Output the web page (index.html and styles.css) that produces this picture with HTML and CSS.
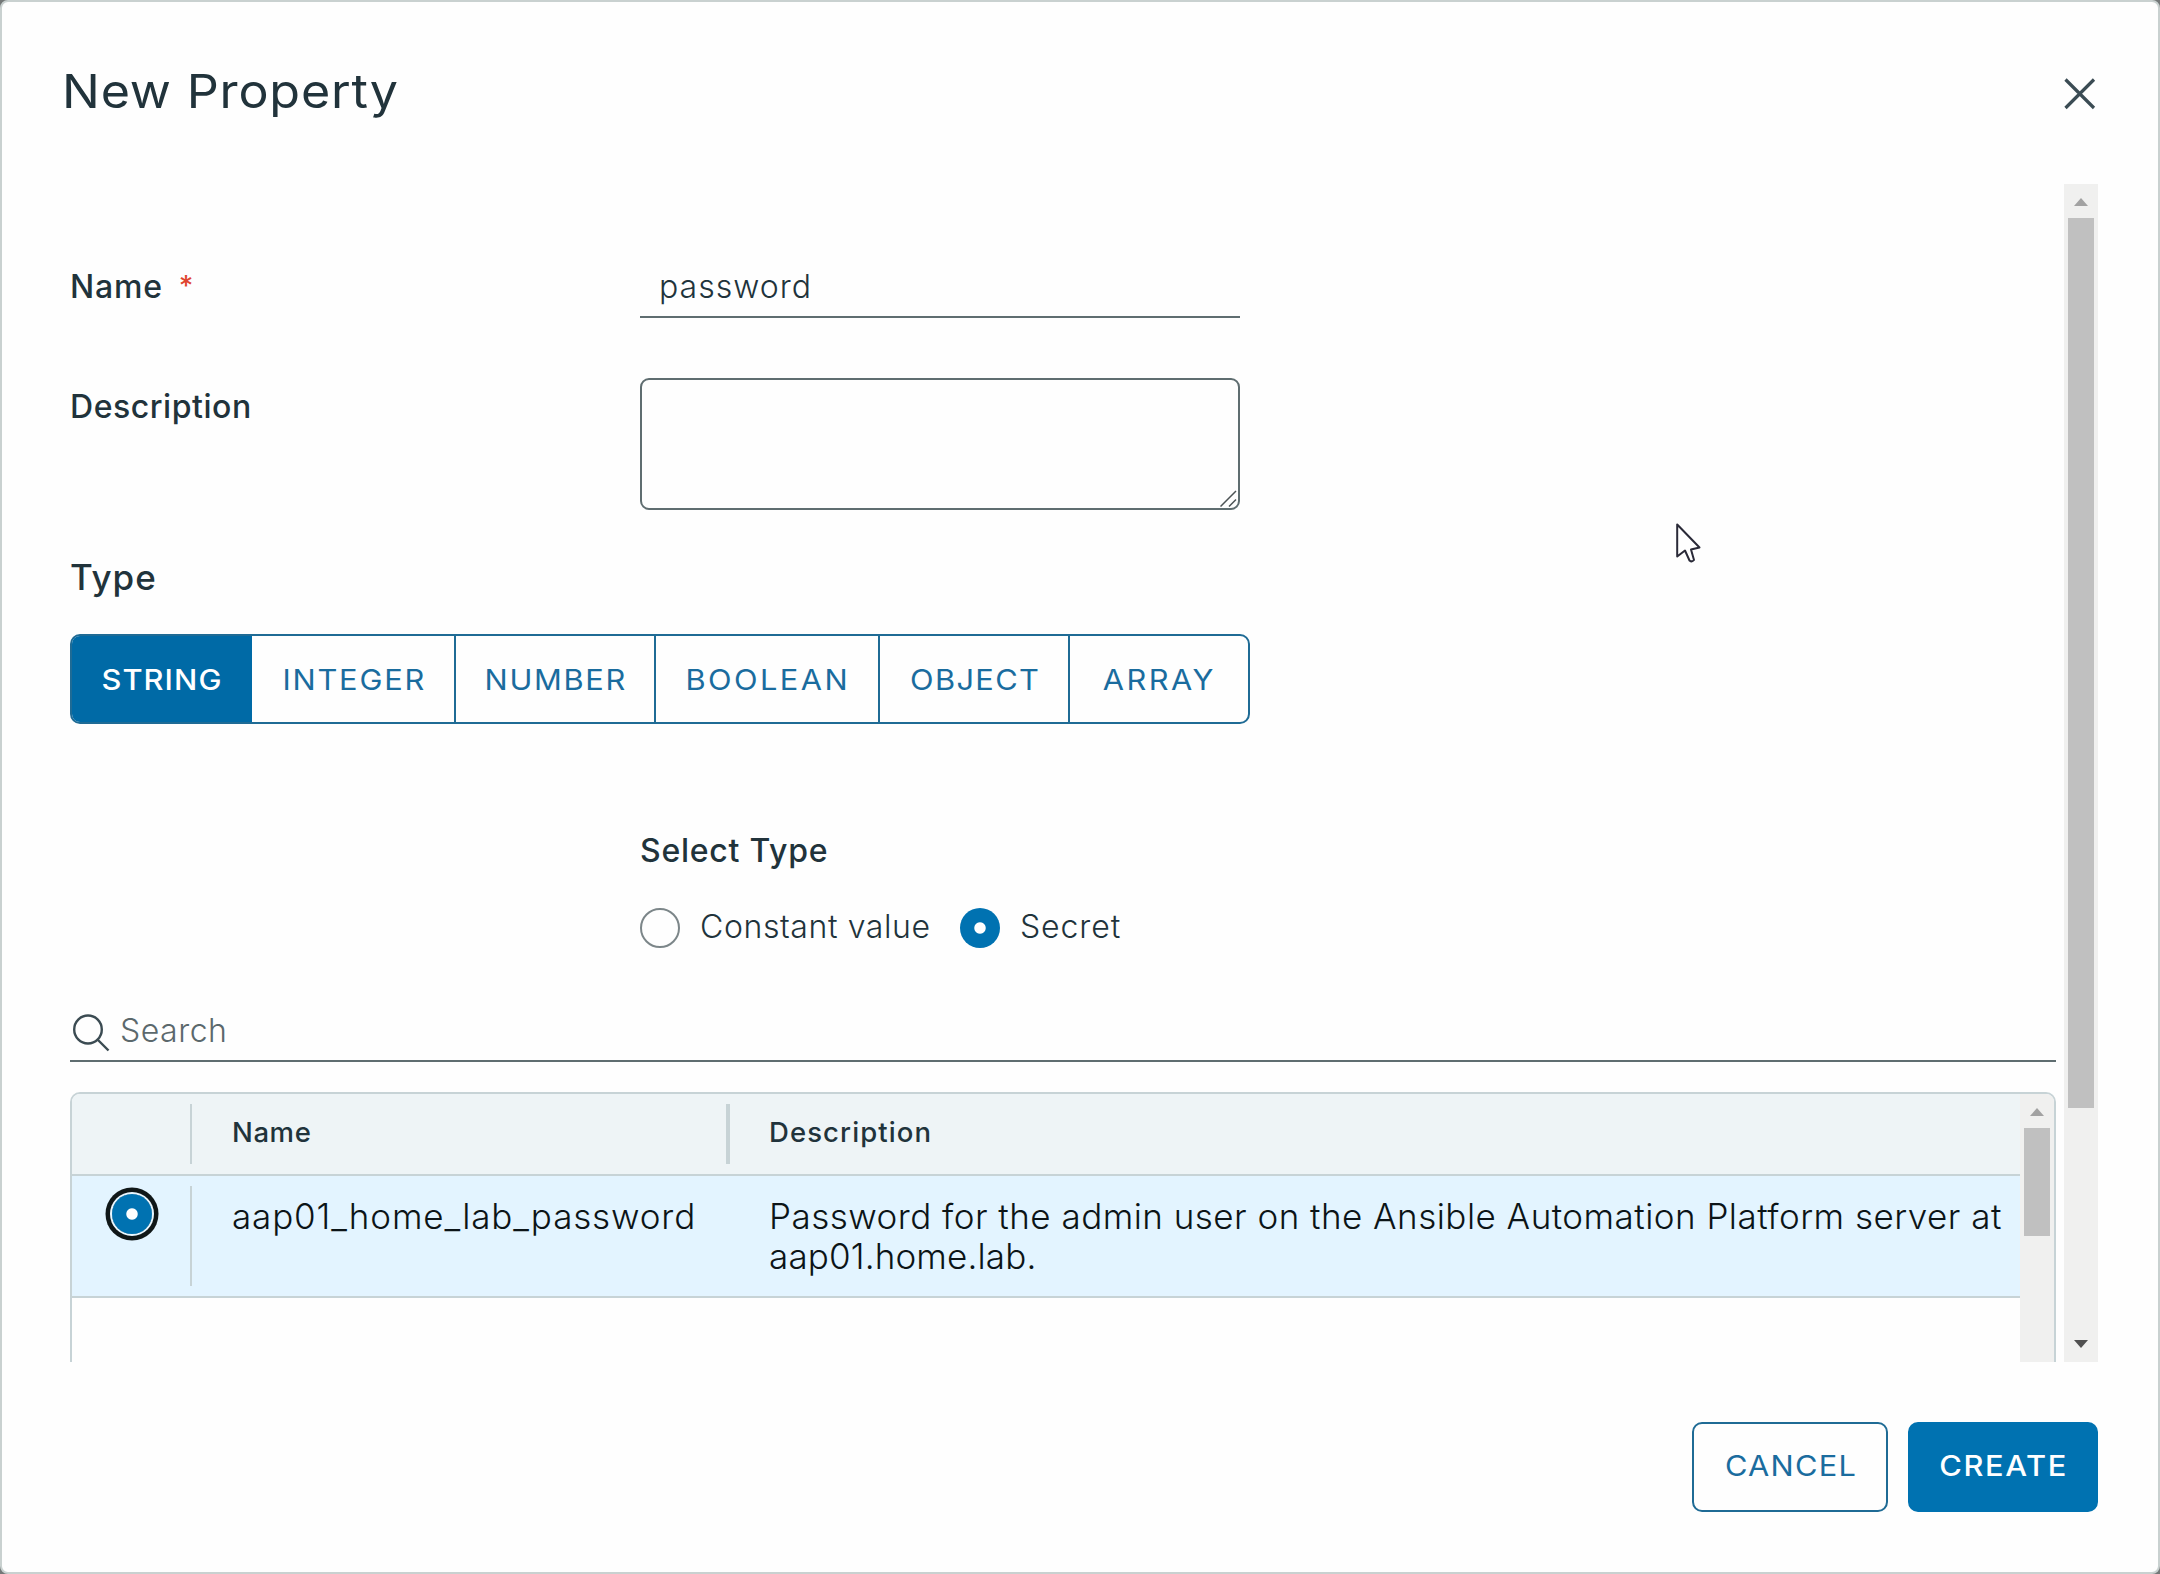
FILE: index.html
```html
<!DOCTYPE html>
<html lang="en">
<head>
<meta charset="utf-8">
<title>New Property</title>
<link rel="stylesheet" href="styles.css">
</head>
<body>
<div class="dialog">
  <header class="dialog-header">
    <h1 class="title">New Property</h1>
    <svg class="close" width="36" height="36" viewBox="0 0 36 36"><path d="M3.5 3.5 32 32M32 3.5 3.5 32"/></svg>
  </header>

  <div class="dialog-body">
    <div class="form">
      <div class="field name-field">
        <span class="label label-name">Name<span class="required">*</span></span>
        <div class="text-input">password</div>
      </div>
      <div class="field description-field">
        <span class="label label-description">Description</span>
        <div class="textarea"><svg class="grip" width="17" height="17" viewBox="0 0 17 17"><path d="M.5 16.500 16 1M9 16.500 16 9.500"/></svg></div>
      </div>

      <h2 class="type-heading">Type</h2>
      <div class="button-group">
        <div class="seg seg-string active"><span>STRING</span></div>
        <div class="seg seg-integer"><span>INTEGER</span></div>
        <div class="seg seg-number"><span>NUMBER</span></div>
        <div class="seg seg-boolean"><span>BOOLEAN</span></div>
        <div class="seg seg-object"><span>OBJECT</span></div>
        <div class="seg seg-array"><span>ARRAY</span></div>
      </div>

      <div class="label select-type">Select Type</div>
      <div class="radios">
        <span class="radio"></span><span class="radio-text constant">Constant value</span>
        <span class="radio checked"></span><span class="radio-text">Secret</span>
      </div>

      <div class="search">
        <svg width="40" height="40" viewBox="0 0 40 40"><ellipse cx="18" cy="16.500" rx="13.800" ry="14"/><path d="M28 27 38.500 37.500"/></svg>
        <span class="placeholder">Search</span>
      </div>

      <div class="grid">
        <div class="grid-content">
          <div class="row head">
            <div class="cell select-cell"></div>
            <div class="cell name-cell">Name</div>
            <div class="cell desc-cell">Description</div>
          </div>
          <div class="row selected">
            <div class="cell select-cell"><span class="radio checked focused"></span></div>
            <div class="cell name-cell">aap01_home_lab_password</div>
            <div class="cell desc-cell">Password for the admin user on the Ansible Automation Platform server at <br><span class="host">aap01.home.lab.</span></div>
          </div>
        </div>
        <div class="scrollbar grid-scroll">
          <span class="arrow up"></span>
          <span class="thumb"></span>
        </div>
      </div>
    </div>

    <div class="scrollbar body-scroll">
      <span class="arrow up"></span>
      <span class="thumb"></span>
      <span class="arrow down"></span>
    </div>
  </div>

  <footer class="dialog-footer">
    <div class="btn cancel"><span>CANCEL</span></div>
    <div class="btn create"><span>CREATE</span></div>
  </footer>
</div>

<svg class="pointer" width="28" height="42" viewBox="0 0 28 42"><path d="M1.200 1.500V33.500L9 27.500L13.500 37.500Q16 39.500 18 37L15 26.500L23.500 24.500Z"/></svg>
</body>
</html>
```
FILE: styles.css
```css
* { box-sizing: border-box; }

body {
  margin: 0;
  background: #747878;
  font-family: Inter, "Liberation Sans", sans-serif;
  color: #21333b;
}

.dialog {
  width: 2160px;
  height: 1574px;
  border: 2px solid #c9d1d0;
  border-radius: 8px;
  background: #fefefe;
  display: flex;
  flex-direction: column;
}

.dialog-header {
  height: 170px;
  padding: 59px 60px 0 60px;
  display: flex;
  justify-content: space-between;
}

.title {
  margin: 0;
  font-size: 46.500px;
  font-weight: 430;
  line-height: 60px;
  letter-spacing: .75px;
  transform: scaleX(1.08);
  transform-origin: left;
}

.close { margin-top: 15px; }
.close path { fill: none; stroke: #3b4c54; stroke-width: 3.200; }

.dialog-body {
  height: 1190px;
  padding: 0 60px 0 68px;
  display: flex;
  justify-content: space-between;
}

.form {
  width: 1986px;
  padding-top: 80px;
  overflow: hidden;
}

.field { display: flex; }
.name-field { height: 66px; }
.description-field { margin-top: 60px; }

.label {
  width: 570px;
  font-size: 32px;
  font-weight: 500;
  line-height: 58px;
  letter-spacing: .8px;
}
.label-name { line-height: 70px; }
.label-description { letter-spacing: .55px; }

.required {
  position: relative;
  top: -2px;
  margin-left: 16px;
  color: #e0452f;
  font-weight: 500;
  font-size: 28px;
}

.text-input {
  width: 600px;
  padding-left: 19px;
  border-bottom: 2px solid #5f6d70;
  font-size: 32px;
  font-weight: 300;
  line-height: 70px;
  letter-spacing: 1px;
}

.textarea {
  width: 600px;
  height: 132px;
  border: 2px solid #5f6d70;
  border-radius: 9px;
  display: flex;
  align-items: flex-end;
  justify-content: flex-end;
  padding: 0 1px 1px 0;
}
.grip path { fill: none; stroke: #4c5355; stroke-width: 1.500; }

.type-heading {
  margin: 47px 0 0;
  font-size: 35px;
  font-weight: 500;
  line-height: 40px;
  letter-spacing: .9px;
}

.button-group {
  width: 1180px;
  height: 90px;
  margin-top: 37px;
  border: 2px solid #1f6b95;
  border-radius: 10px;
  display: flex;
  overflow: hidden;
}

.seg {
  border-right: 2px solid #1f6b95;
  font-size: 28px;
  font-weight: 430;
  line-height: 88px;
  text-align: center;
  color: #1a6c9e;
  letter-spacing: 1.600px;
}
.seg span, .btn span {
  display: inline-block;
  margin-right: -1.600px;
  transform: scaleX(1.1);
}
.seg:last-child { border-right: 0; }
.seg.active {
  margin: -2px 0 -2px -2px;
  padding-top: 2px;
  border: 0;
  background: #006aa6;
  color: #fff;
  font-weight: 500;
}
.seg-string { width: 182px; letter-spacing: .95px; }
.seg-integer { width: 204px; }
.seg-number { width: 200px; letter-spacing: 1.500px; }
.seg-boolean { width: 224px; letter-spacing: 2.200px; }
.seg-object { width: 190px; letter-spacing: 1.200px; }
.seg-array { flex: 1; letter-spacing: 2.200px; }

.select-type {
  margin: 106px 0 0 570px;
  height: 40px;
  line-height: 42px;
  letter-spacing: .75px;
}

.radios {
  margin: 38px 0 0 570px;
  height: 40px;
  display: flex;
}

.radio {
  width: 40px;
  height: 40px;
  border: 2px solid #7c8689;
  border-radius: 50%;
  flex: none;
}
.radio.checked {
  border: 0;
  background: radial-gradient(circle, #fff 5.200px, #0072b1 6.200px);
}
.radio.focused { box-shadow: 0 0 0 2px #e9f7ff, 0 0 0 6.500px #101718; }

.radio-text {
  padding-left: 20px;
  font-size: 32px;
  font-weight: 300;
  line-height: 38px;
  letter-spacing: .9px;
}
.radio-text.constant { width: 280px; letter-spacing: .6px; }

.search {
  height: 62px;
  margin-top: 52px;
  border-bottom: 2px solid #5f6d70;
  display: flex;
}
.search svg { margin-top: 13px; }
.search svg * { fill: none; stroke: #3b4b52; stroke-width: 2.400; }
.placeholder {
  margin-left: 10px;
  font-size: 32px;
  font-weight: 300;
  line-height: 62px;
  letter-spacing: .5px;
  color: #5b686c;
}

.grid {
  height: 280px;
  margin-top: 30px;
  border: 2px solid #c7d3d6;
  border-radius: 10px;
  display: flex;
  overflow: hidden;
}

.grid-content { width: 1948px; }

.row {
  height: 82px;
  padding: 10px 0;
  border-bottom: 2px solid #c7d3d6;
  display: flex;
}
.row.head {
  background: #eef4f6;
  font-size: 27.500px;
  font-weight: 500;
  line-height: 56px;
  letter-spacing: 1.100px;
}
.row.selected {
  height: 122px;
  background: #e3f4ff;
  color: #0c1417;
  font-size: 35px;
  font-weight: 300;
  line-height: 40px;
}

.select-cell {
  width: 120px;
  border-right: 2px solid #c7d3d6;
}
.select-cell .radio {
  display: block;
  margin: 8px 0 0 40px;
}
.name-cell {
  width: 538px;
  padding-left: 40px;
}
.head .name-cell { border-right: 4px solid #c7d3d6; }
.desc-cell { padding-left: 39px; white-space: nowrap; }
.head .name-cell { letter-spacing: .6px; }
.selected .name-cell { padding-top: 10px; letter-spacing: .85px; }
.selected .desc-cell { padding-top: 10px; letter-spacing: .47px; }
.selected .host { letter-spacing: .15px; }

.scrollbar {
  background: #f0f0ef;
  width: 34px;
  display: flex;
  flex-direction: column;
  align-items: center;
}
.thumb {
  width: 26px;
  background: #c0c0c0;
}
.arrow { width: 14px; height: 8px; }
.arrow.up {
  background: #a2a2a2;
  clip-path: polygon(50% 0, 100% 100%, 0 100%);
}
.arrow.down {
  margin: auto 0 14px;
  background: #505050;
  clip-path: polygon(0 0, 100% 0, 50% 100%);
}
.grid-scroll .arrow { margin-top: 14px; }
.grid-scroll .thumb { margin-top: 12px; height: 108px; }
.body-scroll { margin-top: 12px; }
.body-scroll .arrow.up { margin-top: 14px; }
.body-scroll .thumb { margin-top: 12px; height: 890px; }

.dialog-footer {
  padding: 60px 60px 0;
  display: flex;
  justify-content: flex-end;
  gap: 20px;
}

.btn {
  height: 90px;
  border: 2px solid #1f6b95;
  border-radius: 10px;
  font-size: 28px;
  font-weight: 430;
  line-height: 84px;
  text-align: center;
  color: #1a6c9e;
  letter-spacing: 1.100px;
}
.cancel { width: 196px; }
.create {
  width: 190px;
  border-color: #0072b1;
  background: #0072b1;
  color: #fff;
  font-weight: 500;
  letter-spacing: 1.500px;
}

.pointer {
  position: absolute;
  left: 1676px;
  top: 523px;
}
.pointer path { fill: #fff; stroke: #2a2a38; stroke-width: 2; stroke-linejoin: round; }
```
